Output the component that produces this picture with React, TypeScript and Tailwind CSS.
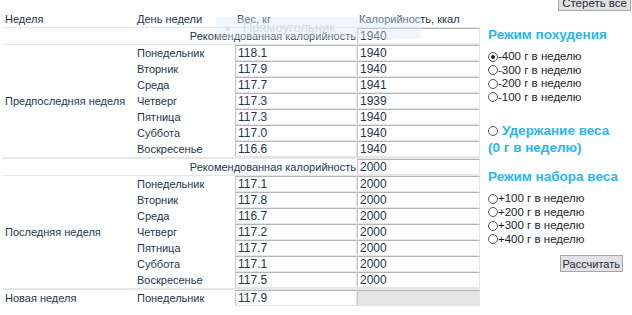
import React from "react";

const FONT = { fontFamily: '"Liberation Sans", Arial, sans-serif' };

type Day = { day: string; w: string; c: string };

const week1: Day[] = [
  { day: "Понедельник", w: "118.1", c: "1940" },
  { day: "Вторник", w: "117.9", c: "1940" },
  { day: "Среда", w: "117.7", c: "1941" },
  { day: "Четверг", w: "117.3", c: "1939" },
  { day: "Пятница", w: "117.3", c: "1940" },
  { day: "Суббота", w: "117.0", c: "1940" },
  { day: "Воскресенье", w: "116.6", c: "1940" },
];
const week2: Day[] = [
  { day: "Понедельник", w: "117.1", c: "2000" },
  { day: "Вторник", w: "117.8", c: "2000" },
  { day: "Среда", w: "116.7", c: "2000" },
  { day: "Четверг", w: "117.2", c: "2000" },
  { day: "Пятница", w: "117.7", c: "2000" },
  { day: "Суббота", w: "117.1", c: "2000" },
  { day: "Воскресенье", w: "117.5", c: "2000" },
];

function Box({ value, disabled }: { value?: string; disabled?: boolean }) {
  return (
    <div
      className={`h-[16px] w-full border-t border-l border-t-[#b4b4b4] border-l-[#c8c8c8] border-b border-r border-b-[#e6e6e6] border-r-[#e6e6e6] pl-[2px] text-[12px] leading-[14px] ${
        disabled ? "bg-[#e4e4e4]" : "bg-white"
      }`}
    >
      {value}
    </div>
  );
}

function Radio({ checked }: { checked?: boolean }) {
  return (
    <span className="inline-flex h-[10px] w-[10px] shrink-0 items-center justify-center rounded-full border border-[#555] bg-white">
      {checked && <span className="h-[4px] w-[4px] rounded-full bg-[#222]" />}
    </span>
  );
}

function WeekRows({ label, rec, days }: { label: string; rec: string; days: Day[] }) {
  return (
    <>
      <tr className="border-b border-[#e6e6e6]">
        <td colSpan={3} className="h-[17px] p-0 pr-[1px] text-right align-middle">
          Рекомендованная калорийность
        </td>
        <td className="p-0 align-middle">
          <Box value={rec} />
        </td>
      </tr>
      {days.map((d, i) => (
        <tr key={d.day} className={i === days.length - 1 ? "border-b-2 border-[#e6e6e6]" : ""}>
          {i === 0 && (
            <td rowSpan={days.length} className="p-0 pl-[2px] align-middle">
              {label}
            </td>
          )}
          <td className="h-[16px] p-0 pl-[2px] align-middle">{d.day}</td>
          <td className="p-0 align-middle">
            <Box value={d.w} />
          </td>
          <td className="p-0 align-middle">
            <Box value={d.c} />
          </td>
        </tr>
      ))}
    </>
  );
}

export default function App() {
  return (
    <div className="relative h-[315px] w-[632px] overflow-hidden bg-white text-[11px] leading-[14px] text-[#263646]" style={FONT}>
      <div className="flex h-[12px] justify-end">
        <button className="-mt-[5px] mr-[1px] h-[16px] border border-[#a6a6a6] bg-[#e1e1e1] px-[3px] text-[11.5px] leading-[13px] text-[#1a2a3a]">
          Стереть все
        </button>
      </div>
      <div className="flex">
        <table className="ml-[3px] w-[477px] table-fixed border-collapse">
          <colgroup>
            <col className="w-[132px]" />
            <col className="w-[100px]" />
            <col className="w-[122px]" />
            <col className="w-[123px]" />
          </colgroup>
          <tbody>
            <tr className="border-b border-[#e6e6e6]">
              <td className="h-[15px] p-0 pb-[1px] pl-[2px] align-bottom leading-[13px]">Неделя</td>
              <td className="p-0 pb-[1px] pl-[2px] align-bottom leading-[13px]">День недели</td>
              <td className="p-0 pb-[1px] pl-[2px] align-bottom leading-[13px]">Вес, кг</td>
              <td className="p-0 pb-[1px] pl-[2px] align-bottom leading-[13px]">Калорийность, ккал</td>
            </tr>
            <WeekRows label="Предпоследняя неделя" rec="1940" days={week1} />
            <WeekRows label="Последняя неделя" rec="2000" days={week2} />
            <tr>
              <td className="h-[18px] p-0 pl-[2px] align-middle">Новая неделя</td>
              <td className="p-0 pl-[2px] align-middle">Понедельник</td>
              <td className="p-0 align-middle">
                <Box value="117.9" />
              </td>
              <td className="p-0 align-middle">
                <Box disabled />
              </td>
            </tr>
          </tbody>
        </table>

        <div className="ml-[8px] flex w-[140px] flex-col text-[11.5px] text-[#1c1c28]">
          <div className="mt-[14px] text-[13.5px] font-bold leading-[18px] text-[#2ab6ee]">Режим похудения</div>
          <div className="mt-[6px] flex flex-col">
            {["-400 г в неделю", "-300 г в неделю", "-200 г в неделю", "-100 г в неделю"].map((t, i) => (
              <div key={t} className="flex h-[13.5px] items-center">
                <Radio checked={i === 0} />
                <span className="leading-[13px]">{t}</span>
              </div>
            ))}
          </div>
          <div className="mt-[18px] text-[13.5px] font-bold leading-[17px] text-[#2ab6ee]">
            <div className="flex items-center gap-[4px]">
              <Radio />
              <span>Удержание веса</span>
            </div>
            <div>(0 г в неделю)</div>
          </div>
          <div className="mt-[12px] text-[13.5px] font-bold leading-[18px] text-[#2ab6ee]">Режим набора веса</div>
          <div className="mt-[6px] flex flex-col">
            {["+100 г в неделю", "+200 г в неделю", "+300 г в неделю", "+400 г в неделю"].map((t) => (
              <div key={t} className="flex h-[13.5px] items-center">
                <Radio />
                <span className="leading-[13px]">{t}</span>
              </div>
            ))}
          </div>
          <div className="mr-[5px] mt-[9px] flex justify-end">
            <button className="h-[17px] border border-[#a6a6a6] bg-[#e1e1e1] px-[2px] text-[11px] leading-[14px] text-[#1a2a3a]">
              Рассчитать
            </button>
          </div>
        </div>
      </div>

      <div className="pointer-events-none absolute left-[216px] top-[17px] flex h-[22px] w-[205px] items-center bg-[#d6e8fb]/40">
        <span className="ml-[9px] h-[5px] w-[5px] rounded-full bg-[#dde3ea]" />
        <span className="ml-[13px] text-[13px] text-[#d3dbe4]">Прямоугольник</span>
      </div>
    </div>
  );
}
